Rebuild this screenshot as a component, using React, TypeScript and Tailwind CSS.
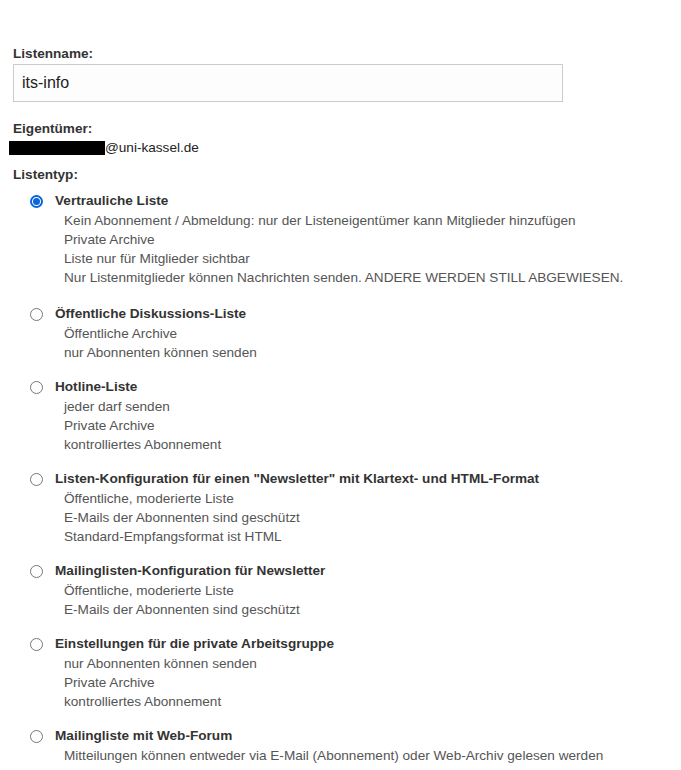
import React from 'react'

type ListType = {
  title: string
  lines: string[]
}

const listTypes: ListType[] = [
  {
    title: 'Vertrauliche Liste',
    lines: [
      'Kein Abonnement / Abmeldung: nur der Listeneigentümer kann Mitglieder hinzufügen',
      'Private Archive',
      'Liste nur für Mitglieder sichtbar',
      'Nur Listenmitglieder können Nachrichten senden. ANDERE WERDEN STILL ABGEWIESEN.',
    ],
  },
  {
    title: 'Öffentliche Diskussions-Liste',
    lines: ['Öffentliche Archive', 'nur Abonnenten können senden'],
  },
  {
    title: 'Hotline-Liste',
    lines: ['jeder darf senden', 'Private Archive', 'kontrolliertes Abonnement'],
  },
  {
    title: 'Listen-Konfiguration für einen "Newsletter" mit Klartext- und HTML-Format',
    lines: [
      'Öffentliche, moderierte Liste',
      'E-Mails der Abonnenten sind geschützt',
      'Standard-Empfangsformat ist HTML',
    ],
  },
  {
    title: 'Mailinglisten-Konfiguration für Newsletter',
    lines: ['Öffentliche, moderierte Liste', 'E-Mails der Abonnenten sind geschützt'],
  },
  {
    title: 'Einstellungen für die private Arbeitsgruppe',
    lines: ['nur Abonnenten können senden', 'Private Archive', 'kontrolliertes Abonnement'],
  },
  {
    title: 'Mailingliste mit Web-Forum',
    lines: ['Mitteilungen können entweder via E-Mail (Abonnement) oder Web-Archiv gelesen werden'],
  },
]

const Radio: React.FC<{ checked?: boolean }> = ({ checked }) =>
  checked ? (
    <span className="w-[13px] h-[13px] rounded-full border-2 border-[#0b65d8] bg-white flex items-center justify-center">
      <span className="w-[7px] h-[7px] rounded-full bg-[#0b65d8]" />
    </span>
  ) : (
    <span className="w-[13px] h-[13px] rounded-full border border-[#767676] bg-white" />
  )

export default function App() {
  return (
    <div className="w-[681px] h-[770px] overflow-hidden bg-white font-['Liberation_Sans',Arial,sans-serif] text-[13.6px] text-[#333]">
      <div className="pt-[45px] pl-[13px]">
        {/* Listenname */}
        <label className="block font-bold leading-[17px]">Listenname:</label>
        <div className="mt-[2px] w-[550px] h-[38px] border border-[#cccccc] bg-[#fdfdfd] flex items-center pl-[8px] text-[16px] text-[#222]">
          its-info
        </div>

        {/* Eigentümer */}
        <div className="mt-[18px] font-bold leading-[17px]">Eigentümer:</div>
        <div className="mt-[2px] flex items-center leading-[17px] -ml-[4px] text-[#222]">
          <span className="inline-block w-[96px] h-[14px] bg-black" />
          <span>@uni-kassel.de</span>
        </div>

        {/* Listentyp */}
        <div className="mt-[10px] font-bold leading-[17px]">Listentyp:</div>

        <div className="mt-[9px] flex flex-col gap-[16px]">
          {listTypes.map((t, i) => (
            <div key={t.title} className={i === 0 ? 'mb-[2px]' : ''}>
              <div className="flex items-center h-[19px]">
                <span className="w-[42px] pl-[17px] flex items-center">
                  <Radio checked={i === 0} />
                </span>
                <span className="font-bold text-[#333]">{t.title}</span>
              </div>
              <div className="pl-[51px] text-[#555] leading-[19px]">
                {t.lines.map((l) => (
                  <div key={l}>{l}</div>
                ))}
              </div>
            </div>
          ))}
        </div>
      </div>
    </div>
  )
}
